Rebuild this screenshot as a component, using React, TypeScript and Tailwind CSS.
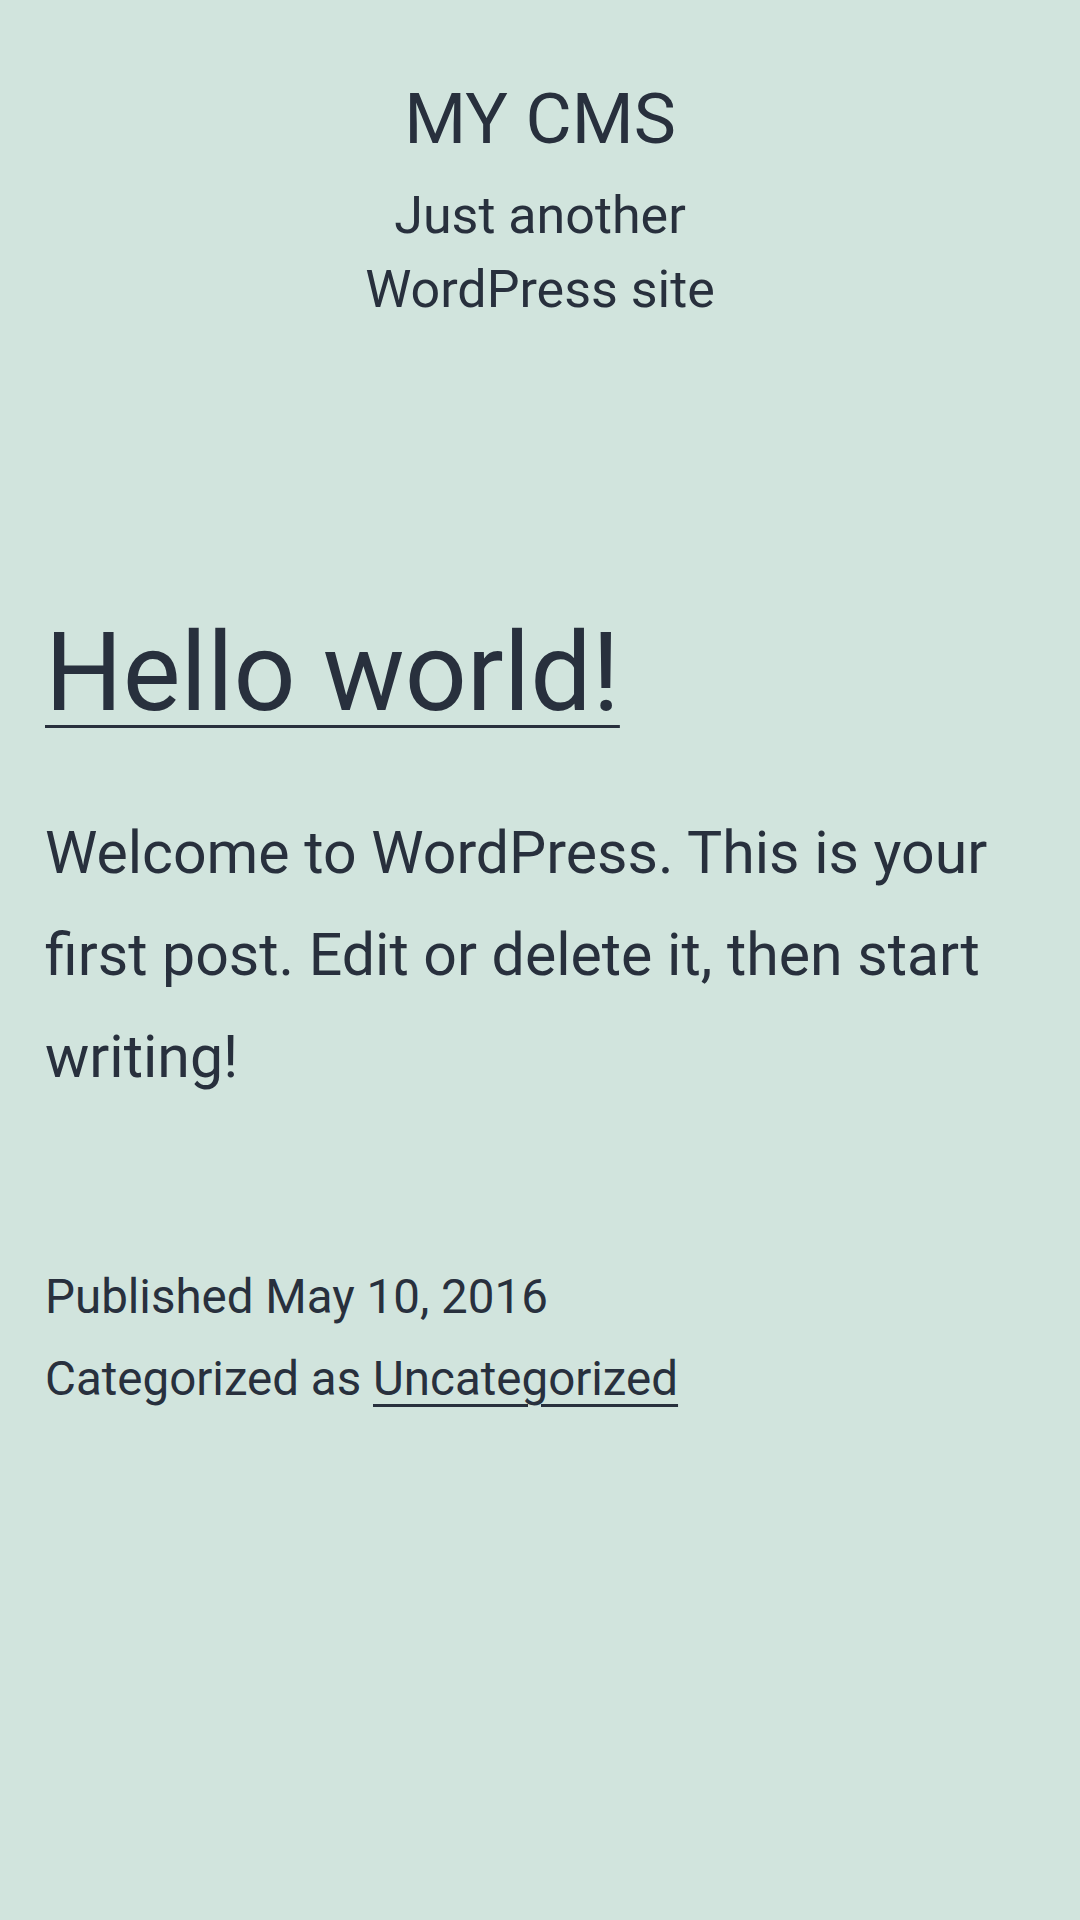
export default function App() {
  return (
    <div className="min-h-screen bg-[#d1e4dd] text-[#28303d] font-['Roboto',sans-serif]">
      <header className="flex flex-col items-center pt-[76px] text-center">
        <p className="text-[71px] leading-[85px] uppercase">My CMS</p>
        <p className="mt-[18px] max-w-[420px] text-[52px] leading-[74px]">
          Just another WordPress site
        </p>
      </header>

      <main className="px-[45px]">
        <article>
          <h1 className="mt-[281px] text-[109px] font-normal leading-[131px]">
            <a
              href="#"
              className="underline decoration-[3px] underline-offset-[15px]"
            >
              Hello world!
            </a>
          </h1>

          <p className="mt-[63px] text-[59px] leading-[102px]">
            Welcome to WordPress. This is your first post. Edit or delete it,
            then start writing!
          </p>

          <footer className="mt-[148px] text-[47.5px] leading-[82px]">
            <p>Published May 10, 2016</p>
            <p>
              Categorized as{" "}
              <a
                href="#"
                className="underline decoration-[3px] underline-offset-[9px]"
              >
                Uncategorized
              </a>
            </p>
          </footer>
        </article>
      </main>
    </div>
  );
}
